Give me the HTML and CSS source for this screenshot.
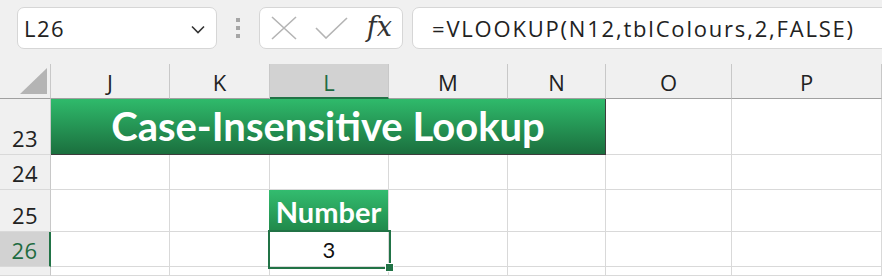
FILE: index.html
```html
<!DOCTYPE html>
<html>
<head>
    <title>Case-Insensitive Lookup</title>
    <link rel="stylesheet" href="styles.css">
</head>
<body>
    <div class="formula-bar">
        <div class="name-box">
            <span>L26</span>
            <svg class="chevron" width="14" height="9" viewBox="0 0 14 9"><path d="M1 1.5 L7 7.5 L13 1.5" fill="none" stroke="#333" stroke-width="1.6"/></svg>
        </div>
        <div class="grip"><span></span><span></span><span></span></div>
        <div class="fx-box">
            <svg width="26" height="24" viewBox="0 0 26 24"><path d="M1 1 L25 23 M25 1 L1 23" stroke="#b4b4b4" stroke-width="1.6"/></svg>
            <svg width="33" height="22" viewBox="0 0 33 22"><path d="M1 11 L11 21 L32 1" fill="none" stroke="#b4b4b4" stroke-width="1.6"/></svg>
            <span class="fx">fx</span>
        </div>
        <div class="formula-box">=VLOOKUP(N12,tblColours,2,FALSE)</div>
    </div>

    <div class="sheet">
        <!-- column headers -->
        <div class="corner"><span class="triangle"></span></div>
        <div class="col-head">J</div>
        <div class="col-head">K</div>
        <div class="col-head active">L</div>
        <div class="col-head">M</div>
        <div class="col-head">N</div>
        <div class="col-head">O</div>
        <div class="col-head">P</div>

        <!-- row 23 -->
        <div class="row-head">23</div>
        <div class="banner">Case-Insensitive Lookup</div>
        <div class="cell"></div>
        <div class="cell"></div>

        <!-- row 24 -->
        <div class="row-head">24</div>
        <div class="cell"></div>
        <div class="cell"></div>
        <div class="cell"></div>
        <div class="cell"></div>
        <div class="cell"></div>
        <div class="cell"></div>
        <div class="cell"></div>

        <!-- row 25 -->
        <div class="row-head">25</div>
        <div class="cell"></div>
        <div class="cell"></div>
        <div class="cell header-cell">Number</div>
        <div class="cell"></div>
        <div class="cell"></div>
        <div class="cell"></div>
        <div class="cell"></div>

        <!-- row 26 -->
        <div class="row-head active">26</div>
        <div class="cell"></div>
        <div class="cell"></div>
        <div class="cell value selected">3<span class="fill-handle"></span></div>
        <div class="cell"></div>
        <div class="cell"></div>
        <div class="cell"></div>
        <div class="cell"></div>

        <!-- row 27 (cut off) -->
        <div class="row-head"></div>
        <div class="cell"></div>
        <div class="cell"></div>
        <div class="cell"></div>
        <div class="cell"></div>
        <div class="cell"></div>
        <div class="cell"></div>
        <div class="cell"></div>
    </div>
</body>
</html>
```

FILE: styles.css
```css
body {
    margin: 0;
    background-color: #f0f0f0;
    font-family: "Open Sans", "Noto Sans", sans-serif;
    color: #222;
    overflow: hidden;
}
.formula-bar {
    display: flex;
    align-items: center;
    height: 64px;
    padding: 0 0 8px 17px;
    box-sizing: border-box;
}
.name-box, .fx-box, .formula-box {
    height: 42px;
    box-sizing: border-box;
    background-color: white;
    border: 1px solid #d6d6d6;
    border-radius: 7px;
    display: flex;
    align-items: center;
}
.name-box {
    width: 200px;
    padding: 0 11px 0 6px;
    justify-content: space-between;
    font-size: 22px;
    letter-spacing: 1.5px;
}
.chevron {
    margin-top: 2px;
}
.grip {
    width: 42px;
    display: flex;
    flex-direction: column;
    align-items: center;
    gap: 4px;
}
.grip span {
    width: 4px;
    height: 4px;
    background-color: #a6a6a6;
}
.fx-box {
    width: 144px;
    padding: 0 10px 0 11px;
    justify-content: space-between;
}
.fx {
    font-family: "DejaVu Serif", "Liberation Serif", serif;
    font-style: italic;
    font-size: 27px;
    color: #333;
    margin-bottom: 3px;
}
.formula-box {
    flex: 1;
    margin-left: 9px;
    margin-right: -10px;
    padding-left: 19px;
    font-size: 22px;
    letter-spacing: 1.8px;
    white-space: nowrap;
}
.sheet {
    display: grid;
    grid-template-columns: 51px 119px 100px 119px 119px 98px 126px 150px;
    grid-template-rows: 35px 56px 35px 42px 35px 9px;
    background-color: white;
}
.corner, .col-head, .row-head {
    background-color: #f0f0f0;
    box-sizing: border-box;
}
.corner {
    border-right: 1px solid #c8c8c8;
    border-bottom: 1px solid #a0a0a0;
    display: flex;
    align-items: flex-end;
    justify-content: flex-end;
    padding: 0 3px 4px 0;
}
.triangle {
    width: 0;
    height: 0;
    border-left: 27px solid transparent;
    border-bottom: 26px solid #b4b4b4;
}
.col-head {
    border-right: 1px solid #c8c8c8;
    border-bottom: 1px solid #a0a0a0;
    display: flex;
    align-items: center;
    justify-content: center;
    font-size: 22px;
    padding-top: 1px;
}
.col-head.active {
    background-color: #d2d2d2;
    color: #1e6b41;
    border-bottom: 2px solid #217346;
    padding-top: 2px;
}
.row-head {
    border-right: 1px solid #c8c8c8;
    border-bottom: 1px solid #d9d9d9;
    display: flex;
    align-items: flex-end;
    justify-content: center;
    font-size: 22px;
    line-height: 1;
    padding-bottom: 5px;
    letter-spacing: 0.5px;
}
.row-head.active {
    background-color: #d2d2d2;
    color: #1e6b41;
    border-right: 2px solid #217346;
}
.cell {
    box-sizing: border-box;
    border-right: 1px solid #d9d9d9;
    border-bottom: 1px solid #d9d9d9;
    font-family: Lato, "Liberation Sans", sans-serif;
}
.banner {
    grid-column: 2 / 7;
    box-sizing: border-box;
    background: linear-gradient(#2fba6b, #1b6f3e);
    border-right: 1px solid #3c3c3c;
    border-bottom: 1px solid #3c3c3c;
    color: white;
    font-family: Lato, "Liberation Sans", sans-serif;
    font-weight: bold;
    font-size: 40px;
    display: flex;
    align-items: center;
    justify-content: center;
    padding-bottom: 1px;
}
.header-cell {
    background: linear-gradient(#33bc6f, #20894a);
    color: white;
    font-weight: bold;
    font-size: 29px;
    display: flex;
    align-items: flex-end;
    justify-content: center;
    padding-bottom: 2px;
    margin-left: -1px;
}
.value {
    display: flex;
    align-items: center;
    justify-content: center;
    font-size: 22px;
    color: #111;
}
.selected {
    position: relative;
    z-index: 1;
    outline: 2px solid #217346;
}
.fill-handle {
    position: absolute;
    right: -6px;
    bottom: -6px;
    width: 7px;
    height: 7px;
    background-color: #217346;
    border: 1px solid white;
}
```
